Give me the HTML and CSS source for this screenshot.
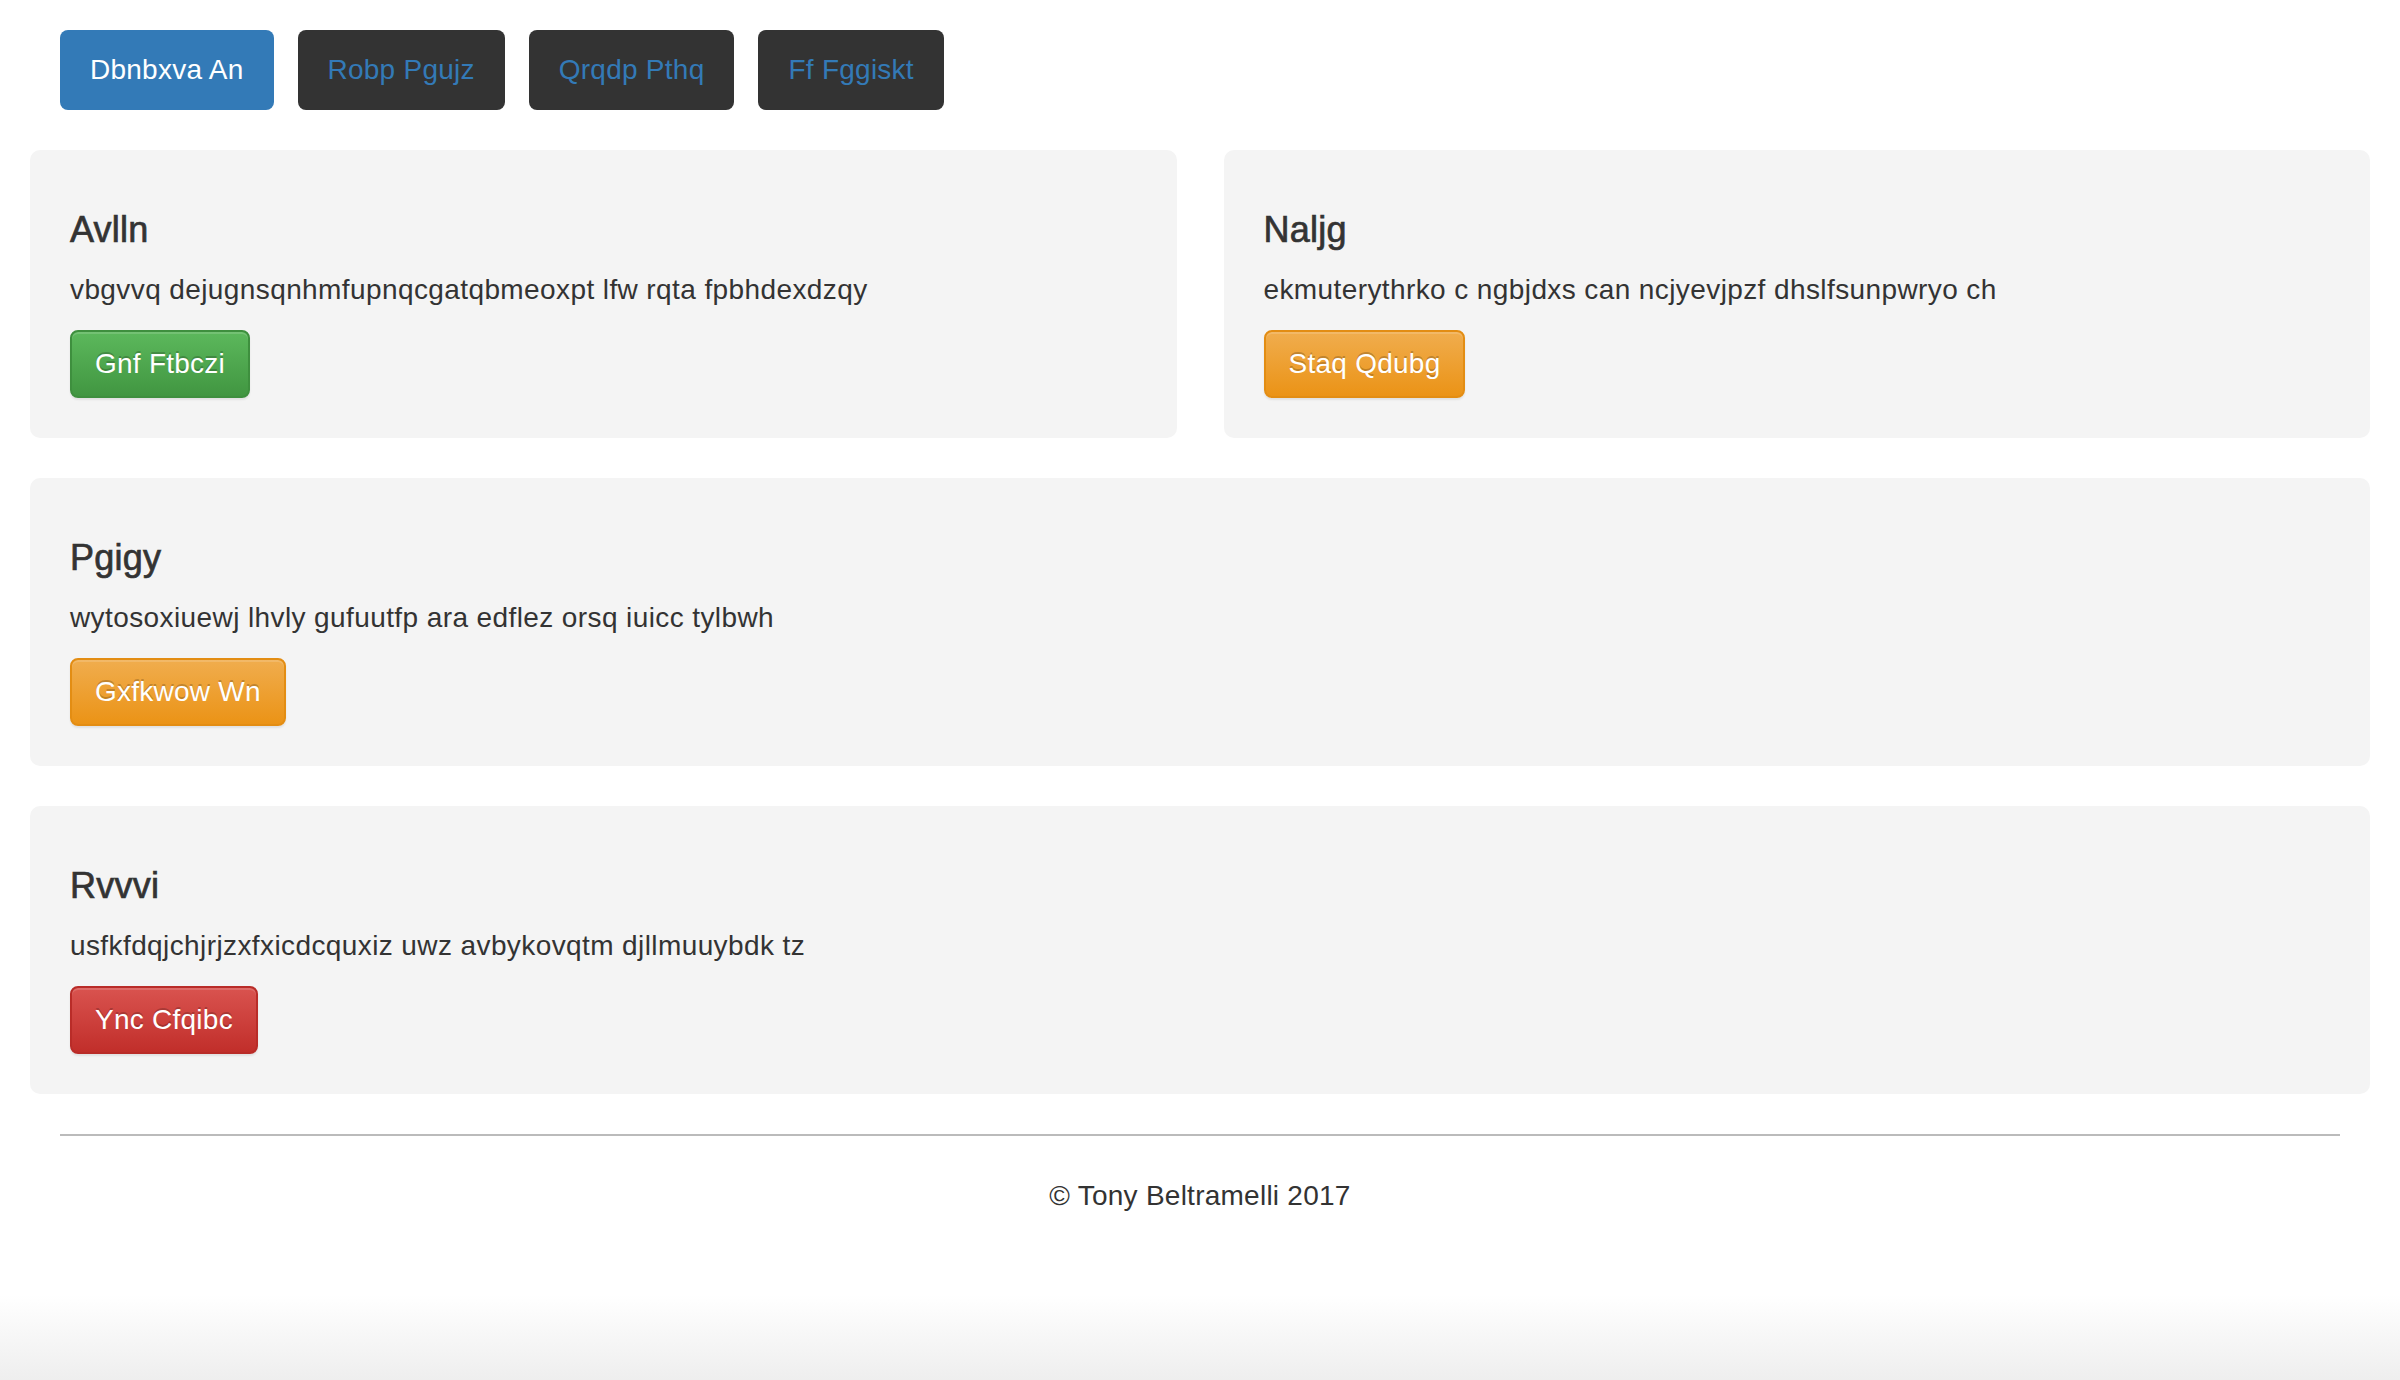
FILE: index.html
```html
<!DOCTYPE html>
<html lang="en">
<head>
<meta charset="utf-8">
<title>Page</title>
<link rel="stylesheet" href="styles.css">
</head>
<body>
<div class="container">
  <nav class="pills">
    <a class="pill pill-active">Dbnbxva An</a>
    <a class="pill">Robp Pgujz</a>
    <a class="pill">Qrqdp Pthq</a>
    <a class="pill">Ff Fggiskt</a>
  </nav>

  <div class="row row-2">
    <section class="well">
      <h4 class="title">Avlln</h4>
      <p class="text">vbgvvq dejugnsqnhmfupnqcgatqbmeoxpt lfw rqta fpbhdexdzqy</p>
      <a class="btn btn-success">Gnf Ftbczi</a>
    </section>
    <section class="well">
      <h4 class="title">Naljg</h4>
      <p class="text">ekmuterythrko c ngbjdxs can ncjyevjpzf dhslfsunpwryo ch</p>
      <a class="btn btn-warning">Staq Qdubg</a>
    </section>
  </div>

  <div class="row">
    <section class="well">
      <h4 class="title">Pgigy</h4>
      <p class="text">wytosoxiuewj lhvly gufuutfp ara edflez orsq iuicc tylbwh</p>
      <a class="btn btn-warning">Gxfkwow Wn</a>
    </section>
  </div>

  <div class="row">
    <section class="well">
      <h4 class="title">Rvvvi</h4>
      <p class="text">usfkfdqjchjrjzxfxicdcquxiz uwz avbykovqtm djllmuuybdk tz</p>
      <a class="btn btn-danger">Ync Cfqibc</a>
    </section>
  </div>

  <footer class="footer">
    <hr class="rule">
    <p class="copy">© Tony Beltramelli 2017</p>
  </footer>
</div>
</body>
</html>
```

FILE: styles.css
```css
html {
  min-height: 100%;
  background: linear-gradient(to bottom, #ffffff 0, #ffffff calc(100% - 85px), #eeeeee 100%);
}

body {
  margin: 0;
  min-height: 1380px;
  font-family: "Liberation Sans", Arial, Helvetica, sans-serif;
  font-size: 28px;
  line-height: 40px;
  letter-spacing: 0.25px;
  color: #333333;
}

.container {
  padding: 0 30px;
}

.pills {
  display: flex;
  gap: 24px;
  margin: 30px 0 40px 30px;
}

.pill {
  display: block;
  height: 80px;
  line-height: 80px;
  padding: 0 30px;
  border-radius: 8px;
  background: #333333;
  color: #337ab7;
  text-decoration: none;
  white-space: nowrap;
}

.pill-active {
  background: #337ab7;
  color: #ffffff;
}

.row {
  margin-bottom: 40px;
}

.row-2 {
  display: grid;
  grid-template-columns: 1fr 1fr;
  gap: 47px;
}

.well {
  background: #f4f4f4;
  border-radius: 10px;
  padding: 40px;
}

.title {
  margin: 20px 0 20px;
  font-size: 36px;
  line-height: 40px;
  font-weight: normal;
  -webkit-text-stroke: 0.7px #333333;
  color: #333333;
}

.text {
  margin: 0 0 20px;
  letter-spacing: 0.4px;
}

.btn {
  display: inline-block;
  box-sizing: border-box;
  height: 68px;
  line-height: 64px;
  padding: 0 23px;
  border: 2px solid transparent;
  border-radius: 8px;
  color: #ffffff;
  text-decoration: none;
  white-space: nowrap;
  text-shadow: 0 -2px 0 rgba(0, 0, 0, 0.2);
  box-shadow: inset 0 2px 0 rgba(255, 255, 255, 0.15), 0 2px 2px rgba(0, 0, 0, 0.075);
  vertical-align: top;
}

.btn-success {
  background: linear-gradient(to bottom, #5cb85c 0, #419641 100%);
  border-color: #3e8f3e;
}

.btn-warning {
  background: linear-gradient(to bottom, #f0ad4e 0, #eb9316 100%);
  border-color: #e38d13;
}

.btn-danger {
  background: linear-gradient(to bottom, #d9534f 0, #c12e2a 100%);
  border-color: #b92c28;
}

.footer {
  padding: 0 30px;
}

.rule {
  margin: 0 0 40px;
  border: 0;
  height: 2px;
  background: #bbbbbb;
}

.copy {
  margin: 0;
  text-align: center;
}
```
